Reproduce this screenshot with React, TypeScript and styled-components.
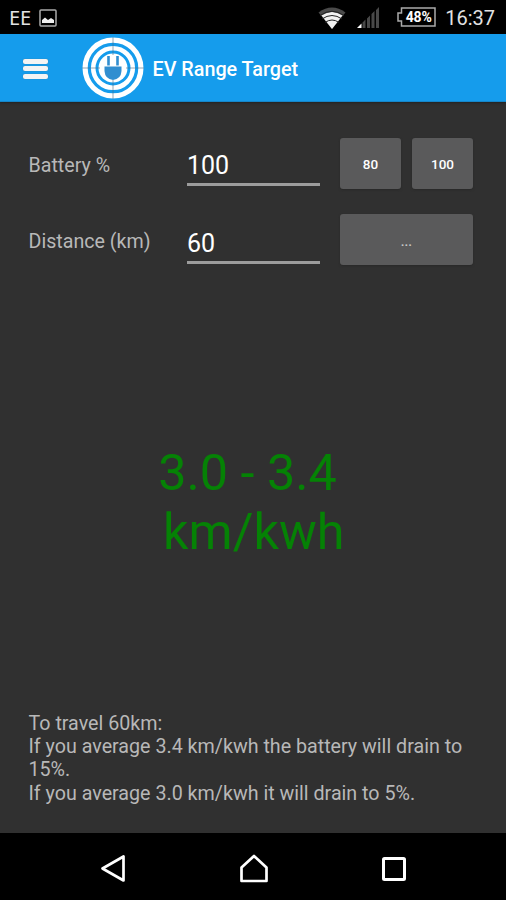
import React, { useState } from "react";
import styled, { createGlobalStyle } from "styled-components";

const GlobalStyle = createGlobalStyle`
  * { box-sizing: border-box; }
  body { margin: 0; background: #303030; font-family: Roboto, "Noto Sans", sans-serif; }
`;

const Screen = styled.div`
  width: 506px;
  height: 900px;
  display: flex;
  flex-direction: column;
  background: #303030;
  overflow: hidden;
`;

const StatusBar = styled.div`
  flex: 0 0 34px;
  display: flex;
  align-items: center;
  padding: 2px 11px 0 9px;
  background: #000;
  color: #e2e2e2;
`;

const Carrier = styled.span`
  font: 400 20px/24px "Noto Sans", sans-serif;
  letter-spacing: -0.1px;
  margin-right: 8px;
`;

const Spacer = styled.div`
  flex: 1;
`;

const StatusIcon = styled.svg<{ $gap?: number }>`
  display: block;
  flex: none;
  margin-right: ${(p) => p.$gap ?? 0}px;
`;

const Battery = styled.div`
  position: relative;
  width: 39px;
  height: 20px;
  margin: -2px 9px 0 0;
  display: flex;
  align-items: center;
  justify-content: center;
  padding-left: 4px;
  font-size: 14px;
  font-weight: 700;
  letter-spacing: -0.2px;
  color: #fff;
`;

const BatteryOutline = styled.svg`
  position: absolute;
  inset: 0;
`;

const Clock = styled.span`
  font-size: 20px;
  line-height: 24px;
`;

const AppBar = styled.header`
  flex: 0 0 68px;
  display: flex;
  align-items: center;
  padding: 1px 0 0 23px;
  background: #159cec;
  border-bottom: 1px solid #1687ca;
  color: #fff;
  box-shadow: 0 1px 2px #222;
`;

const MenuButton = styled.button`
  width: 25px;
  height: 20px;
  margin: 1px 34px 0 0;
  padding: 0;
  border: 0;
  background: none;
  display: flex;
  flex-direction: column;
  justify-content: space-between;
`;

const MenuLine = styled.span`
  width: 100%;
  height: 5px;
  border-radius: 2px;
  background: #f4f4f4;
  box-shadow: 0 0 1px #4f6f88;
`;

const Title = styled.h1`
  margin: 3px 0 0 8.5px;
  font-size: 19.75px;
  font-weight: 500;
`;

const Content = styled.main`
  flex: 1;
  display: flex;
  flex-direction: column;
  padding: 36px 27px 28px 28.5px;
  color: #b8b8b8;
`;

const FormRow = styled.div<{ $after: number }>`
  display: grid;
  grid-template-columns: 138.5px 133px 133px;
  column-gap: 20px;
  height: 51px;
  margin-bottom: ${(p) => p.$after}px;
`;

const Label = styled.label`
  font-size: 19.65px;
  line-height: 23px;
  padding-top: 16px;
`;

const Field = styled.input<{ $drop: number }>`
  width: 133px;
  height: 34px;
  margin-top: ${(p) => 14 + p.$drop}px;
  padding: 0 0 4px;
  border: 0;
  border-bottom: 3px solid #9c9c9c;
  border-radius: 0;
  outline: 0;
  background: transparent;
  color: #fff;
  font: 400 25px/27px Roboto, sans-serif;
`;

const Actions = styled.div`
  display: flex;
  gap: 11px;
`;

const Button = styled.button<{ $muted?: boolean }>`
  flex: 1;
  height: 51px;
  padding: ${(p) => (p.$muted ? 3 : 1)}px 0 0;
  border: 0;
  border-radius: 3px;
  background: #5a5a5b;
  box-shadow: 0 1px 2px #292929;
  color: ${(p) => (p.$muted ? "#c9c9c9" : "#fff")};
  font: 500 13.5px/16px Roboto, sans-serif;
`;

const Result = styled.div`
  flex: 1;
  padding-top: 178px;
  text-align: center;
  color: #058205;
  font-size: 50.3px;
  line-height: 59px;
`;

const Summary = styled.p`
  margin: 0;
  font-size: 19.68px;
  line-height: 23.3px;
  white-space: pre-line;
`;

const NavBar = styled.nav`
  flex: 0 0 67px;
  display: flex;
  align-items: center;
  justify-content: space-between;
  padding: 5px 98px 0 99px;
  background: #000;
`;

const Wifi = () => (
  <StatusIcon $gap={11} width="28" height="24" viewBox="0 0 28 24">
    <path d="M14 23 L0.5 6.500 Q14 -3.5 27.500 6.500Z" fill="#4a4a4a" />
    <path d="M14 23 L3.5 9.500 Q14 2.500 24.500 9.500Z" fill="#f2f2f2" />
    <g fill="none" stroke="#222" strokeWidth="1">
      <path d="M2 9.500 Q14 1 26 9.500" />
      <path d="M4 13 Q14 6 24 13" />
      <path d="M7 16.500 Q14 11.500 21 16.500" />
    </g>
  </StatusIcon>
);

const Signal = () => (
  <StatusIcon $gap={17} width="23" height="22" viewBox="0 0 23 22">
    <path d="M0 21 L4.500 16.500V21Z" fill="#fff" />
    <path d="M5.500 15.500 L8.500 12.500V21H5.500Z M10 11.500 L13 8.500V21H10Z M14.500 7 L17.500 4V21H14.500Z M19 3 L22 0V21H19Z" fill="#484848" />
  </StatusIcon>
);

const Logo = () => (
  <svg width="62" height="62" viewBox="0 0 62 62">
    <circle cx="31" cy="31" r="27.900" fill="none" stroke="#fff" strokeWidth="5.200" />
    <circle cx="31" cy="31" r="19.800" fill="none" stroke="#fff" strokeWidth="4.600" />
    <circle cx="31" cy="31" r="14.500" fill="#fff" />
    <path d="M26.500 19V28.500M35.500 19V28.500" stroke="#318ed0" strokeWidth="2.600" />
    <path d="M22.500 29.500H39.500V34Q39 42 31 43Q23 42 22.500 34Z" fill="#318ed0" />
    <path d="M31 0V18M31 43V62M0 31H18M44 31H62" stroke="#48708b" strokeWidth="0.600" />
  </svg>
);

export default function App() {
  const [charge, setCharge] = useState("100");
  const [distance, setDistance] = useState("60");
  return (
    <>
      <GlobalStyle />
      <Screen>
        <StatusBar>
          <Carrier>EE</Carrier>
          <StatusIcon width="18" height="18" viewBox="0 0 18 18">
            <rect x="1" y="1" width="16" height="16" rx="1" fill="none" stroke="#aaa" strokeWidth="1.500" />
            <path d="M3 14V11L6 8.500L9 11L12 9L15 11V14Z" fill="#eee" />
          </StatusIcon>
          <Spacer />
          <Wifi />
          <Signal />
          <Battery>
            <BatteryOutline width="39" height="20" viewBox="0 0 39 20">
              <path d="M4.500 1H38V19H4.500V14H1V6H4.500Z" fill="none" stroke="#aaa" strokeWidth="1.500" />
            </BatteryOutline>
            48%
          </Battery>
          <Clock>16:37</Clock>
        </StatusBar>
        <AppBar>
          <MenuButton aria-label="Menu">
            <MenuLine />
            <MenuLine />
            <MenuLine />
          </MenuButton>
          <Logo />
          <Title>EV Range Target</Title>
        </AppBar>
        <Content>
          <FormRow $after={25}>
            <Label htmlFor="charge">Battery %</Label>
            <Field id="charge" $drop={0} value={charge} onChange={(e) => setCharge(e.target.value)} />
            <Actions>
              <Button onClick={() => setCharge("80")}>80</Button>
              <Button onClick={() => setCharge("100")}>100</Button>
            </Actions>
          </FormRow>
          <FormRow $after={0}>
            <Label htmlFor="distance">Distance (km)</Label>
            <Field id="distance" $drop={2} value={distance} onChange={(e) => setDistance(e.target.value)} />
            <Actions>
              <Button $muted>...</Button>
            </Actions>
          </FormRow>
          <Result>
            3.0 - 3.4&nbsp;
            <br />
            km/kwh
          </Result>
          <Summary>
            {"To travel 60km:\nIf you average 3.4 km/kwh the battery will drain to 15%.\nIf you average 3.0 km/kwh it will drain to 5%."}
          </Summary>
        </Content>
        <NavBar>
          <svg width="28" height="30" viewBox="0 0 28 30" fill="none" stroke="#fff" strokeWidth="2.700" strokeLinejoin="round">
            <path d="M3.500 14.500L24.500 2.500V26.500Z" />
          </svg>
          <svg width="30" height="30" viewBox="0 0 30 30" fill="none" stroke="#fff" strokeWidth="2.700" strokeLinejoin="round">
            <path d="M15 2L27.500 13.500V27H2.500V13.500Z" />
          </svg>
          <svg width="28" height="28" viewBox="0 0 28 28" fill="none" stroke="#fff" strokeWidth="3">
            <rect x="3.500" y="3.500" width="21" height="21" rx="1" />
          </svg>
        </NavBar>
      </Screen>
    </>
  );
}
